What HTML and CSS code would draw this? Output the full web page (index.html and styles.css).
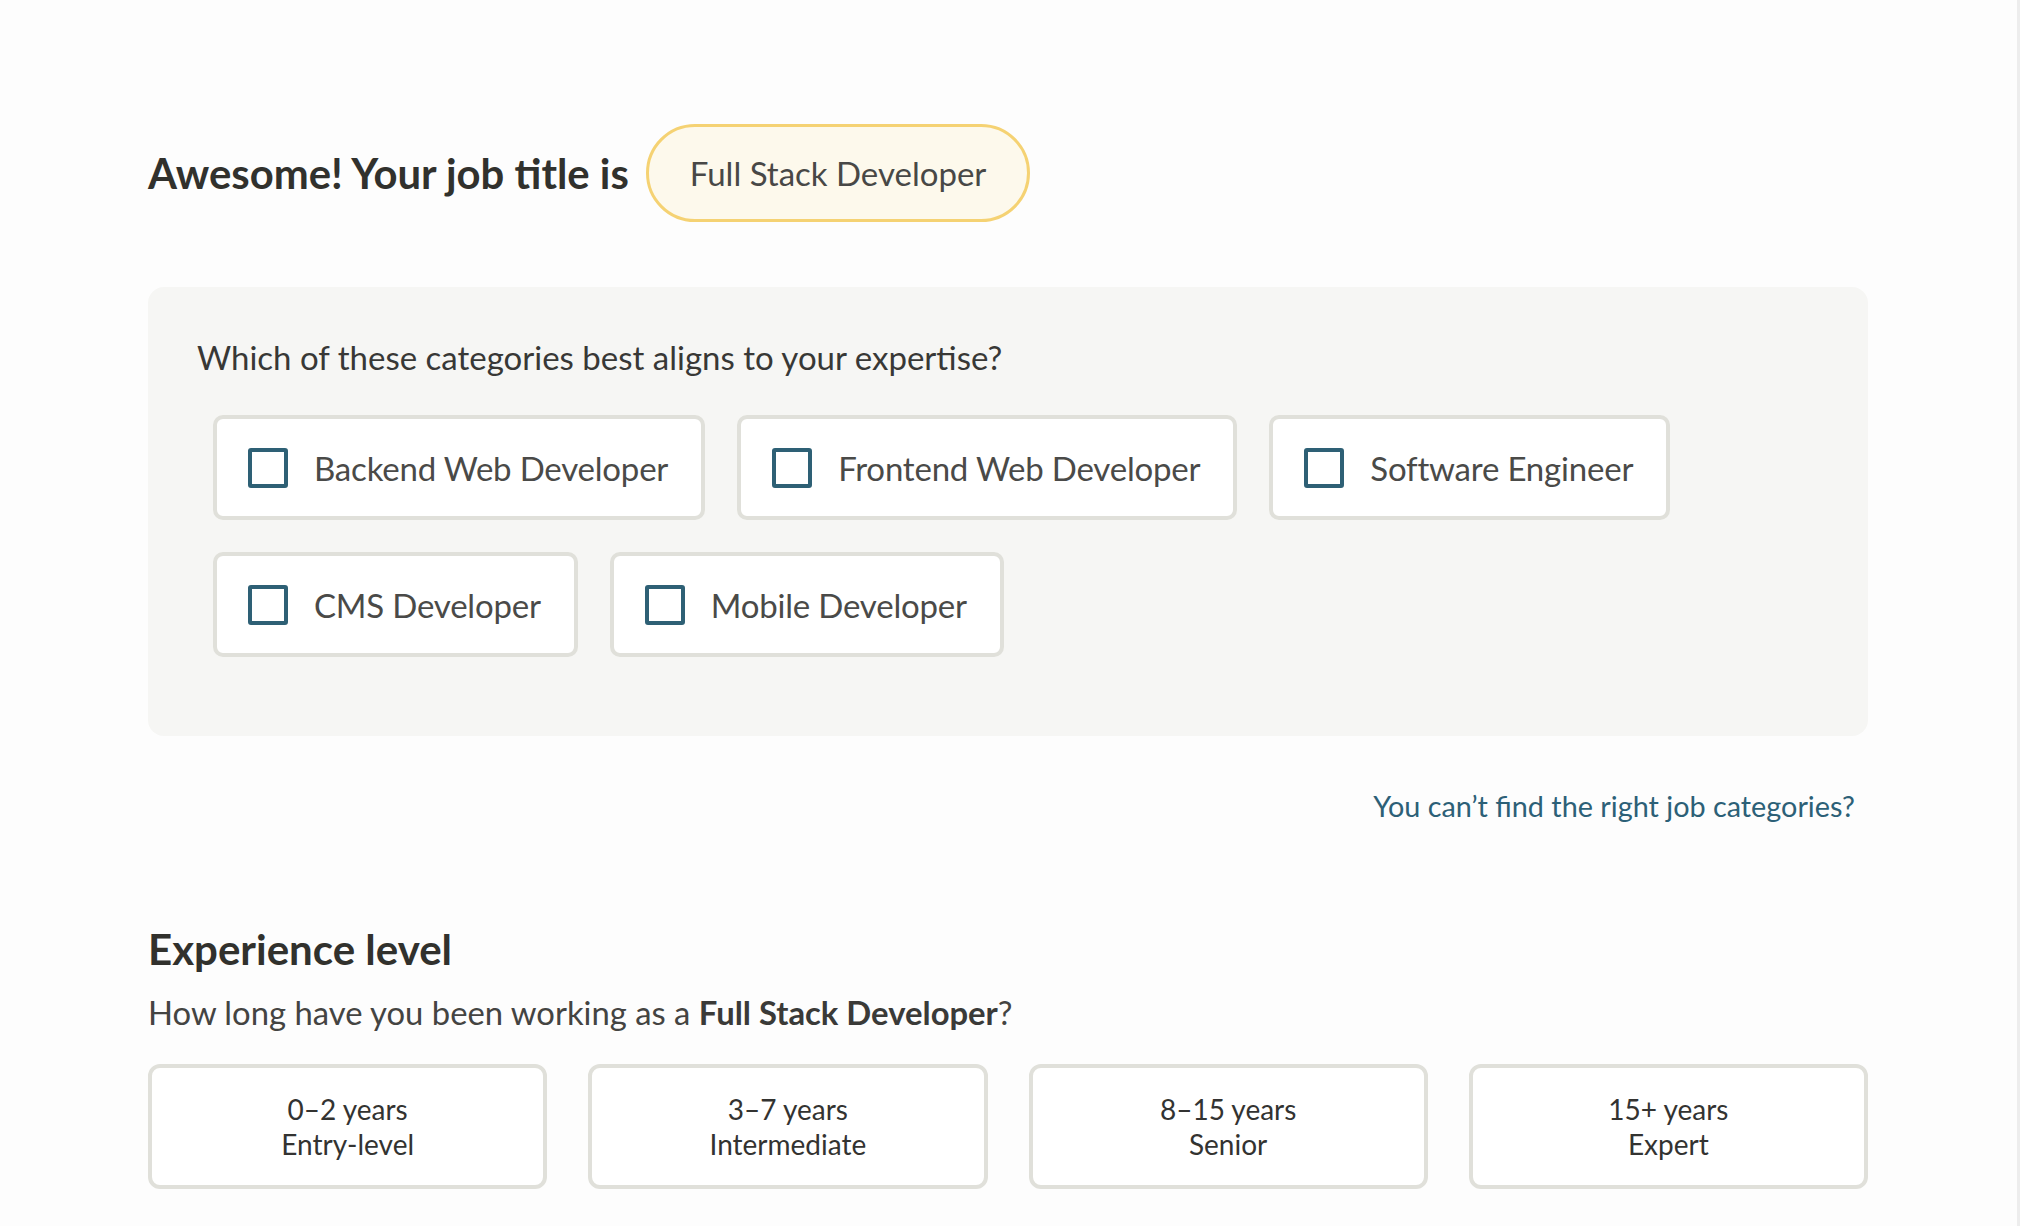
FILE: index.html
```html
<!DOCTYPE html>
<html lang="en">
<head>
<meta charset="utf-8">
<title>Job title</title>
<link rel="stylesheet" href="styles.css">
</head>
<body>
<div class="frame">
  <main class="page">
    <header class="title-row">
      <h1 class="title">Awesome! Your job title is</h1>
      <span class="pill">Full Stack Developer</span>
    </header>

    <section class="panel">
      <p class="question">Which of these categories best aligns to your expertise?</p>
      <div class="options">
        <div class="option-row">
          <label class="option"><span class="box"></span><span class="option-text">Backend Web Developer</span></label>
          <label class="option"><span class="box"></span><span class="option-text">Frontend Web Developer</span></label>
          <label class="option"><span class="box"></span><span class="option-text">Software Engineer</span></label>
        </div>
        <div class="option-row">
          <label class="option"><span class="box"></span><span class="option-text">CMS Developer</span></label>
          <label class="option"><span class="box"></span><span class="option-text">Mobile Developer</span></label>
        </div>
      </div>
    </section>

    <div class="link-row">
      <a class="help-link" href="#">You can’t find the right job categories?</a>
    </div>

    <section class="experience">
      <h2 class="exp-title">Experience level</h2>
      <p class="exp-question">How long have you been working as a <strong>Full Stack Developer</strong>?</p>
      <div class="levels">
        <button class="level"><span>0–2 years</span><span>Entry-level</span></button>
        <button class="level"><span>3–7 years</span><span>Intermediate</span></button>
        <button class="level"><span>8–15 years</span><span>Senior</span></button>
        <button class="level"><span>15+ years</span><span>Expert</span></button>
      </div>
    </section>
  </main>
</div>
</body>
</html>
```

FILE: styles.css
```css
* { box-sizing: border-box; }

html, body {
  margin: 0;
  padding: 0;
  background: #fdfdfd;
}

body {
  font-family: Lato, "Liberation Sans", sans-serif;
  color: #333331;
}

.frame {
  min-height: 100vh;
  border-right: 3px solid #ededed;
}

.page {
  width: 1720px;
  margin-left: 148px;
  padding-top: 124px;
}

.title-row {
  display: flex;
  align-items: center;
  gap: 17px;
}

.title {
  margin: 0;
  font-size: 41.8px;
  font-weight: 700;
  line-height: 50px;
  color: #31312d;
}

.pill {
  display: inline-flex;
  align-items: center;
  height: 98px;
  padding: 0 41px;
  border: 3px solid #f5d273;
  border-radius: 49px;
  background: #fdf9ec;
  font-size: 33px;
  color: #484846;
}

.panel {
  margin-top: 65px;
  background: #f6f6f4;
  border-radius: 16px;
  padding: 50px 49px 79px;
}

.question {
  margin: 0;
  font-size: 33px;
  line-height: 40px;
  color: #383836;
}

.options {
  margin-top: 38px;
  margin-left: 16px;
  display: flex;
  flex-direction: column;
  gap: 32px;
}

.option-row {
  display: flex;
  gap: 32px;
}

.option {
  display: flex;
  align-items: center;
  gap: 26px;
  background: #fff;
  border: 4px solid #e0e0da;
  border-radius: 10px;
  padding: 29px 33px 28px 31px;
}

.box {
  width: 40px;
  height: 40px;
  border: 4px solid #2e6075;
  border-radius: 3px;
  flex: none;
}

.option-text {
  font-size: 33px;
  line-height: 40px;
  letter-spacing: -0.2px;
  color: #4a4a48;
}

.link-row {
  margin-top: 53px;
  display: flex;
  justify-content: flex-end;
  padding-right: 13px;
}

.help-link {
  font-size: 28.8px;
  line-height: 34px;
  color: #2c6077;
  text-decoration: none;
}

.experience {
  margin-top: 101px;
}

.exp-title {
  margin: 0;
  font-size: 42px;
  line-height: 50px;
  font-weight: 700;
  color: #31312d;
}

.exp-question {
  margin: 19px 0 0;
  font-size: 32.8px;
  line-height: 40px;
  color: #444442;
}

.exp-question strong {
  font-weight: 700;
  color: #3a3a38;
}

.levels {
  margin-top: 31px;
  display: grid;
  grid-template-columns: repeat(4, 1fr);
  gap: 41px;
}

.level {
  display: flex;
  flex-direction: column;
  align-items: center;
  height: 125px;
  padding: 24px 0 0;
  background: #fff;
  border: 4px solid #e0e0da;
  border-radius: 12px;
  font-family: Lato, "Liberation Sans", sans-serif;
  font-size: 28px;
  line-height: 35px;
  color: #333331;
}
```
